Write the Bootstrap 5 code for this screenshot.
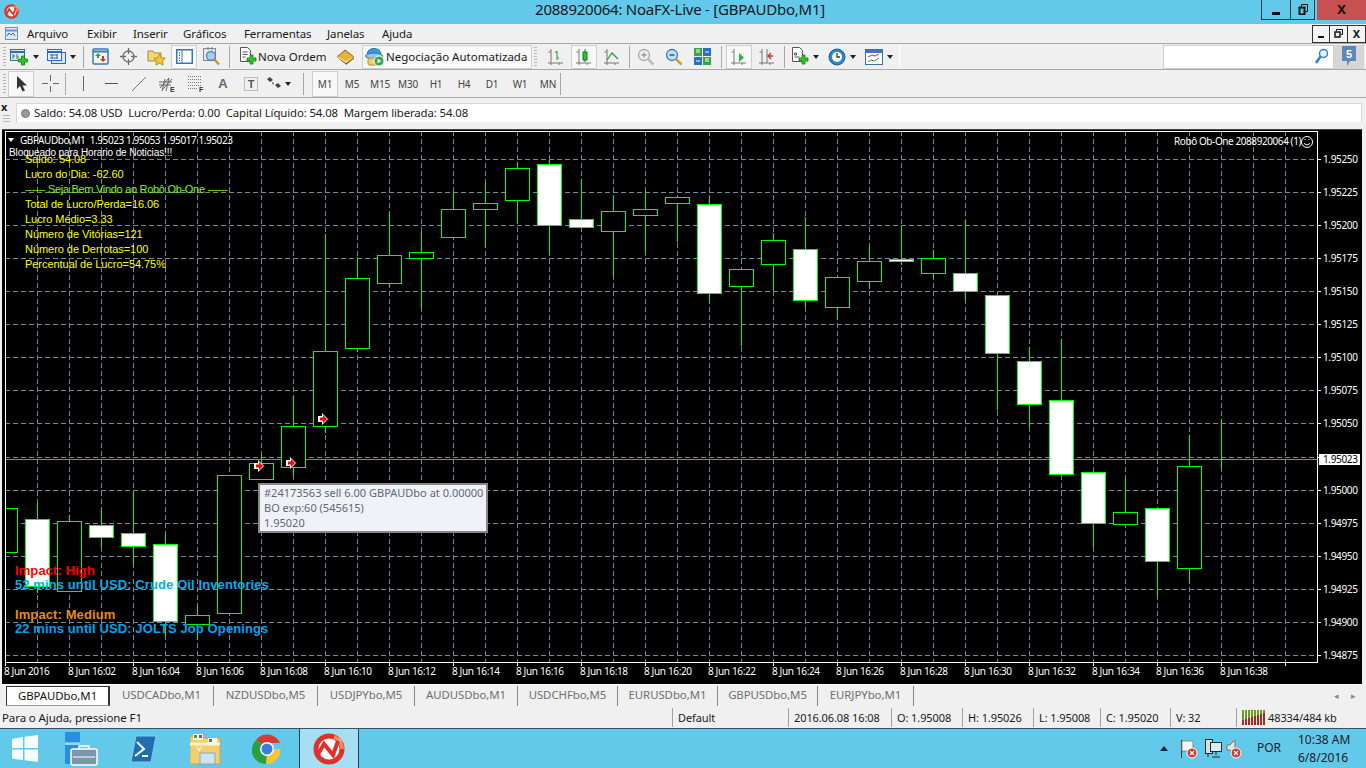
<!DOCTYPE html>
<html lang="pt">
<head>
  <meta charset="UTF-8" />
  <title>2088920064: NoaFX-Live - [GBPAUDbo,M1]</title>
  <link href="https://cdn.jsdelivr.net/npm/bootstrap@5.3.0/dist/css/bootstrap.min.css" rel="stylesheet">
  <style>
    html, body { height: 768px; overflow: hidden; }
    body { background: #f0f0f0; font: 11.5px/1.2 "Noto Sans", sans-serif; color: #1a1a1a; white-space: nowrap; }
    svg { display: block; flex: none; }

    .title-bar { height: 24px; background: #63c9ea; position: relative; font-size: 15px; }
    .title-text { flex: 1; text-align: center; padding-left: 80px; color: #101820; letter-spacing: -.25px; }
    .win-btn { height: 20px; border: 1px solid #1f3540; border-top: 0; border-left-width: 0; }
    .wb-min { width: 30px; border-left-width: 1px; }
    .wb-res { width: 24px; margin-right: 2px; }
    .wb-close { width: 49px; background: #c75050; border: 0; font-weight: 700; color: #111; font-size: 13px; }

    .menu-row { height: 20px; border-bottom: 1px solid #a8a8a8; }
    .menu-item { letter-spacing: -.1px; }
    .mi1 { width: 60px; } .mi2 { width: 46px; } .mi3 { width: 50px; } .mi4 { width: 61px; } .mi5 { width: 83px; } .mi6 { width: 55px; }
    .mdi-btn { width: 18px; height: 18px; border: 1px solid #333; border-left-width: 0; background: #f4f4f4; font-weight: 700; font-size: 11px; line-height: 15px; }
    .mdi-first { border-left-width: 1px; }

    .tool-row { height: 26px; border-bottom: 1px solid #a8a8a8; padding-left: 3px; position: relative; }
    .tool-row2 { height: 28px; }
    .grip { width: 3px; height: 20px; margin-right: 2px; background: repeating-linear-gradient(#b5b5b5 0 1px, #f0f0f0 1px 3px); }
    .tb { width: 26px; height: 24px; margin-right: 2px; border: 1px solid transparent; flex: none; }
    .tb-on { background: #f8f8f8; border-color: #cfcfcf; }
    .tb-wide { width: 34px; margin-right: 3px; gap: 4px; justify-content: flex-end; padding-right: 2px; }
    .tb-order { width: 96px; gap: 1px; margin-left: 1px; }
    .tb-auto { width: 170px; gap: 1px; background: #f8f8f8; border-color: #cfcfcf; padding-left: 2px; justify-content: flex-start; margin-left: 2px; }
    .caret-dn { width: 0; height: 0; border: 3px solid transparent; border-top: 4px solid #222; border-bottom: 0; }
    .sep { width: 1px; height: 22px; background: #a8a8a8; margin: 0 3px 0 2px; flex: none; }
    .sep-tight { margin-left: 1px; }
    .sep-wide { margin: 0 4px 0 4px; }
    .sep-far { margin-left: 10px; }
    .sep-last { margin-left: -2px; }
    .tb-end { width: 1px; height: 25px; background: #fff; }
    .search-box { width: 171px; height: 24px; background: #fff; border: 1px solid #d0d0d0; padding-right: 4px; }
    .bubble-btn { width: 30px; height: 24px; background: #d6d6d6; margin-right: 2px; }
    .tf { width: 28px; height: 26px; font-size: 10px; color: #444; letter-spacing: -.2px; flex: none; }
    .tf-on { width: 26px; background: #f8f8f8; border: 1px solid #cfcfcf; margin-left: 5px; }
    .tool2 { height: 26px; width: 28px; flex: none; }
    .tool2-on { width: 26px; background: #f8f8f8; border: 1px solid #cfcfcf; margin-right: 2px; }
    .tool-a { font: 700 13px "Liberation Sans", sans-serif; color: #666; }

    .info-row { height: 31px; padding: 5px 4px 4px 0; }
    .info-side { width: 16px; font-weight: 700; font-size: 11px; line-height: 8px; padding-left: 1px; }
    .info-grip { width: 7px; height: 8px; margin: 4px 0 0 2px; background: repeating-linear-gradient(#b5b5b5 0 1px, #f0f0f0 1px 3px); }
    .info-box { flex: 1; height: 20px; background: #fff; border: 1px solid #d8d8d8; border-bottom-color: #f0f0f0; padding-left: 4px; gap: 4px; }
    .led { width: 9px; height: 9px; border-radius: 50%; background: #9a9a9a; border: 1px solid #777; }
    .info-text { white-space: pre; font-size: 11.4px; letter-spacing: -.12px; }

    .chart-wrap { height: 555px; margin: 0 4px 0 2px; background: #000; position: relative; border-top: 1px solid #444; }
    .chart-svg text { font-family: "Noto Sans", sans-serif; font-size: 10px; fill: #fff; letter-spacing: -.35px; white-space: pre; }
    .chart-svg .head-txt { letter-spacing: -.42px; }
    .chart-svg .block-txt { font-family: "Liberation Sans", sans-serif; letter-spacing: -.1px; }
    .chart-svg .yellow-txt { font-family: "Liberation Sans", sans-serif; font-size: 11px; fill: #ff0; letter-spacing: -.05px; }
    .chart-svg .lime-txt { font-family: "Liberation Sans", sans-serif; font-size: 11px; fill: #7cfc00; letter-spacing: -.3px; }
    .chart-svg .news-txt { font-family: "Liberation Sans", sans-serif; font-size: 13px; font-weight: 700; letter-spacing: .1px; }
    .order-tip { position: absolute; left: 256px; top: 353px; width: 230px; height: 50px; background: #f0f2f8; border: 2px solid #878787; color: #5f6675; padding: 0 0 0 4px; font-size: 11px; line-height: 15px; }

    .tab-row { height: 22px; padding: 1px 0 0 6px; border-top: 1px solid #fff; }
    .sym-tab { height: 20px; text-align: center; color: #6f6f6f; border-right: 1px solid #8a8a8a; line-height: 18px; font-size: 11.4px; letter-spacing: -.05px; }
    .tab-active { width: 104px; color: #111; background: #fff; border: 1px solid #333; border-bottom-color: #999; border-right-width: 2px; }
    .tw104 { width: 104px; } .tw97 { width: 97px; } .tw103 { width: 103px; } .tw100 { width: 100px; } .tw96 { width: 96px; }
    .tab-arrows { gap: 12px; padding-right: 10px; color: #888; font-size: 9px; }

    .status-row { height: 22px; }
    .st-cell { height: 19px; border-left: 1px solid #a0a0a0; padding-left: 5px; line-height: 19px; font-size: 11px; letter-spacing: -.1px; }
    .st-help { width: 672px; padding-left: 2px; border: 0; font-size: 11.5px; }
    .sw116 { width: 116px; } .sw103 { width: 103px; } .sw71 { width: 71px; } .sw67 { width: 67px; } .sw70 { width: 70px; } .sw66 { width: 66px; }
    .sw-rest { flex: 1; gap: 3px; }

    .task-bar { height: 40px; background: #63c9ea; border-top: 1px solid #2f5565; font-size: 12px; }
    .task-app { height: 39px; flex: none; }
    .ta-start { width: 49px; }
    .ta-mgr { width: 65px; } .ta-ps { width: 58px; } .ta-fld { width: 66px; } .ta-gc { width: 58px; }
    .ta-mt { width: 60px; background: #a6dff3; border: 1px solid #27424e; border-width: 0 1px; margin-left: 3px; }
    .tray { gap: 7px; padding-right: 18px; }
    .tray-tri { width: 0; height: 0; border: 4px solid transparent; border-bottom: 5px solid #123; border-top: 0; margin-right: 5px; }
    .tray-net { margin-right: -3px; }
    .clock-txt { text-align: center; line-height: 18px; margin-left: 10px; width: 50px; }
  </style>
</head>
<body>

<svg width="0" height="0" class="position-absolute">
  <defs>
    <symbol id="plus" viewBox="0 0 18 18"><path d="M8 8h3V5h3v3h3v3h-3v3h-3v-3H8z" transform="translate(0 3)" fill="#34c524" stroke="#0f7d12" stroke-width=".8"/></symbol>
    <symbol id="mtlogo" viewBox="0 0 32 32"><circle cx="16" cy="16" r="13" fill="#fff" stroke="#e0302a" stroke-width="5"/><path d="M21 4a13 13 0 0 1 8 12" fill="none" stroke="#f08a5a" stroke-width="4"/><path d="M4 23 11 11l9 11 5-14" fill="none" stroke="#e0302a" stroke-width="4"/><path d="M25 5l4 1-1 5" fill="#f4a27c"/></symbol>
    <symbol id="axes" viewBox="0 0 18 18"><path d="M4 1v16M1 15h15M1.500 4H4M12 15v2" stroke="#777" fill="none"/></symbol>
  </defs>
</svg>

<div class="title-bar d-flex align-items-start">
  <svg class="ms-1 mt-1" width="15" height="15"><use href="#mtlogo"/></svg>
  <div class="title-text pt-0">2088920064: NoaFX-Live - [GBPAUDbo,M1]</div>
  <div class="win-btn wb-min d-flex justify-content-center align-items-end pb-1"><svg width="8" height="3"><rect width="8" height="3" fill="#111"/></svg></div>
  <div class="win-btn wb-res d-flex justify-content-center align-items-center"><svg width="10" height="11" fill="none" stroke="#111"><path d="M3.500 2.500V.5h6v7h-2"/><rect x="1.500" y="3.500" width="5" height="7" stroke-width="2"/></svg></div>
  <div class="win-btn wb-close d-flex justify-content-center align-items-center">X</div>
</div>

<div class="menu-row d-flex align-items-center">
  <svg class="ms-1 me-2" width="15" height="15" viewBox="0 0 15 15"><rect x="1.500" y="1.500" width="12" height="12" fill="#dfe9f5" stroke="#6a92c4"/><path d="M1 4.500h13" stroke="#6a92c4" stroke-width="2"/><path d="M3 10l2-3 2 2 2-2 2 3" fill="none" stroke="#3a62a0"/></svg>
  <nav class="d-flex">
    <span class="menu-item mi1">Arquivo</span><span class="menu-item mi2">Exibir</span><span class="menu-item mi3">Inserir</span><span class="menu-item mi4">Gráficos</span><span class="menu-item mi5">Ferramentas</span><span class="menu-item mi6">Janelas</span><span class="menu-item mi7">Ajuda</span>
  </nav>
  <div class="ms-auto d-flex">
    <div class="mdi-btn mdi-first d-flex justify-content-center align-items-end pb-1"><svg width="6" height="2"><rect width="6" height="2" fill="#111"/></svg></div>
    <div class="mdi-btn d-flex justify-content-center align-items-center"><svg width="9" height="9" fill="none" stroke="#111"><path d="M2.500 2V.5h6v5H7"/><rect x="1" y="3" width="5" height="5" stroke-width="1.500"/></svg></div>
    <div class="mdi-btn text-center">X</div>
  </div>
</div>

<div class="tool-row d-flex align-items-center">
  <div class="grip"></div>
  <div class="tb tb-wide d-flex align-items-center">
    <svg width="19" height="18" viewBox="0 0 19 18"><rect x=".5" y="1.500" width="14" height="11" fill="#dcebfa" stroke="#2f6ca8"/><path d="M.5 4h14" stroke="#2f6ca8" stroke-width="2"/><path d="M3 6v5M3 8h2M7 6v5M7 9h2" stroke="#3a7c3a"/><use href="#plus" width="19" height="18"/></svg>
    <span class="caret-dn"></span>
  </div>
  <div class="tb tb-wide d-flex align-items-center">
    <svg width="19" height="18" viewBox="0 0 19 18"><rect x="4.500" y="4.500" width="14" height="11" fill="#d7e6f6" stroke="#2f6ca8"/><rect x=".5" y="1.500" width="14" height="11" fill="#e8f1fb" stroke="#2f6ca8"/><path d="M.5 4h14" stroke="#2f6ca8" stroke-width="2"/><path d="M3 7h8M3 10h8M5 6v5M10 6v5" stroke="#3a6ea5"/></svg>
    <span class="caret-dn"></span>
  </div>
  <div class="sep sep-tight"></div>
  <div class="tb d-flex justify-content-center align-items-center"><svg width="17" height="17" viewBox="0 0 17 17"><rect x="1" y="1" width="15" height="15" rx="1" fill="#f2f6fb" stroke="#3a78b8" stroke-width="1.500"/><path d="M1 3.500h15" stroke="#3a78b8" stroke-width="2"/><path d="M6 5l3 3H7v2H5V8H3z" fill="#2aa83a"/><path d="M11 14l-3-3h2V8h2v3h2z" fill="#d8331f"/></svg></div>
  <div class="tb d-flex justify-content-center align-items-center"><svg width="17" height="17" viewBox="0 0 17 17" fill="none" stroke="#6c6c6c" stroke-width="1.300"><circle cx="8.500" cy="8.500" r="5.500"/><path d="M8.500 0v6M8.500 11v6M0 8.500h6M11 8.500h6"/></svg></div>
  <div class="tb d-flex justify-content-center align-items-center"><svg width="19" height="18" viewBox="0 0 19 18"><path d="M1 3h5l1 2h7v8H1z" fill="#f5d678" stroke="#a98a30"/><path d="M12.500 6l1.800 3.700 4 .6-2.900 2.800.7 4-3.600-1.900-3.600 1.900.7-4-2.900-2.800 4-.6z" fill="#f7c52e" stroke="#a97f10" stroke-width=".8"/></svg></div>
  <div class="tb tb-on d-flex justify-content-center align-items-center"><svg width="17" height="15" viewBox="0 0 17 15"><rect x=".75" y=".75" width="15.500" height="13.500" fill="#fff" stroke="#2c78c4" stroke-width="1.500"/><path d="M6 1v13" stroke="#2c78c4"/><path d="M3 4h1M3 6.500h1M3 9h1M3 11.500h1" stroke="#333"/></svg></div>
  <div class="tb d-flex justify-content-center align-items-center"><svg width="18" height="19" viewBox="0 0 18 19"><rect x=".5" y="1.500" width="12" height="12" fill="#e4e9ef" stroke="#7d8a98"/><path d="M5 0v3M9 0v3" stroke="#777"/><circle cx="8" cy="9" r="4.500" fill="#a7cdf0" stroke="#5c7fa0" stroke-width="1.300"/><path d="M11.500 12.500l4.500 5" stroke="#d08a1e" stroke-width="2.200"/></svg></div>
  <div class="sep"></div>
  <div class="tb tb-order d-flex align-items-center justify-content-start ps-1">
    <svg width="18" height="19" viewBox="0 0 18 19"><path d="M1.500.5h7l3 3v11h-10z" fill="#fff" stroke="#555"/><path d="M3.500 5h5M3.500 7.500h5M3.500 10h3" stroke="#555"/><use href="#plus" x="0" y="0" width="18" height="18"/></svg>
    <span class="tb-label">Nova Ordem</span>
  </div>
  <div class="tb d-flex justify-content-center align-items-center"><svg width="19" height="16" viewBox="0 0 19 16"><path d="M1 8l8-7 9 7-8 7z" fill="#e6b43a" stroke="#8a6414"/><path d="M1 8l9 5 8-5" fill="none" stroke="#fff2c4"/><path d="M10 15l8-7v1.500L10 16z" fill="#8a6414"/></svg></div>
  <div class="tb tb-auto d-flex align-items-center">
    <svg width="20" height="20" viewBox="0 0 20 20"><ellipse cx="9" cy="6" rx="6.500" ry="4.500" fill="#3f9bd8" stroke="#2470a8"/><ellipse cx="9" cy="9" rx="8.500" ry="3" fill="#8cc7ec" stroke="#2470a8"/><rect x="3" y="11" width="11" height="7" rx="2" fill="#f2cf6c" stroke="#b58c2c"/><circle cx="14" cy="14" r="5" fill="#2ba84a" stroke="#fff"/><path d="M12.500 11.500v5l4-2.500z" fill="#fff"/></svg>
    <span>Negociação Automatizada</span>
  </div>
  <div class="grip"></div>
  <div class="ms-1 d-flex align-items-center" id="chart-tools">
    <div class="tb d-flex justify-content-center align-items-center"><svg width="18" height="18"><use href="#axes"/><path d="M10 3v9M8 4h2M10 10h2" stroke="#1d9b2e" fill="none"/></svg></div>
    <div class="tb tb-on d-flex justify-content-center align-items-center"><svg width="18" height="18"><use href="#axes"/><rect x="8" y="4" width="4" height="8" fill="#2bc23b" stroke="#127a1e"/><path d="M10 1v3M10 12v2" stroke="#127a1e"/></svg></div>
    <div class="tb d-flex justify-content-center align-items-center"><svg width="18" height="18"><use href="#axes"/><path d="M4 12l5-7 6 6" stroke="#1d9b2e" fill="none" stroke-width="1.200"/></svg></div>
    <div class="sep"></div>
    <div class="tb d-flex justify-content-center align-items-center"><svg width="18" height="18" viewBox="0 0 18 18" fill="none" stroke="#a9a9a9"><circle cx="7" cy="7" r="5.500" fill="#eee" stroke-width="1.300"/><path d="M4.500 7h5M7 4.500v5" stroke="#999" stroke-width="1.300"/><path d="M11 11l5.500 5.500" stroke="#bbb" stroke-width="2.500"/></svg></div>
    <div class="tb d-flex justify-content-center align-items-center"><svg width="18" height="18" viewBox="0 0 18 18" fill="none"><circle cx="7" cy="7" r="5.500" fill="#bfe0f7" stroke="#3a7cbc" stroke-width="1.300"/><path d="M4.500 7h5" stroke="#245a96" stroke-width="1.500"/><path d="M11 11l5.500 5.500" stroke="#d89a2a" stroke-width="2.500"/></svg></div>
    <div class="tb d-flex justify-content-center align-items-center"><svg width="17" height="17" viewBox="0 0 17 17"><rect width="8" height="8" fill="#3aa34a"/><rect x="9" width="8" height="8" fill="#2c6fc0"/><rect y="9" width="8" height="8" fill="#2c6fc0"/><rect x="9" y="9" width="8" height="8" fill="#3aa34a"/><path d="M2 4h4M11 4h4M2 13h4M11 13h4M2 2h4M11 11h4" stroke="#fff"/></svg></div>
    <div class="sep sep-wide"></div>
    <div class="tb tb-on d-flex justify-content-center align-items-center"><svg width="18" height="18"><use href="#axes"/><path d="M9 5l5 4.500L9 14z" fill="#2bb53a"/></svg></div>
    <div class="tb d-flex justify-content-center align-items-center"><svg width="18" height="18"><use href="#axes"/><path d="M9 1v14" stroke="#777"/><path d="M15 8l-5 0M13 5l-3 3 3 3" stroke="#d0301f" fill="none" stroke-width="1.300"/></svg></div>
    <div class="sep"></div>
    <div class="tb tb-wide d-flex align-items-center"><svg width="18" height="19" viewBox="0 0 18 19"><path d="M1.500.5h7l3 3v11h-10z" fill="#fff" stroke="#555"/><path d="M3.500 6h2v2h-2zM3.500 10h5" stroke="#555" fill="none"/><use href="#plus" width="18" height="18"/></svg><span class="caret-dn"></span></div>
    <div class="tb tb-wide d-flex align-items-center"><svg width="18" height="18" viewBox="0 0 18 18"><circle cx="9" cy="9" r="8" fill="#2b86d2" stroke="#16619e"/><circle cx="9" cy="9" r="5" fill="#fff"/><path d="M9 5v4h3" stroke="#1c3c58" fill="none" stroke-width="1.300"/></svg><span class="caret-dn"></span></div>
    <div class="tb tb-wide d-flex align-items-center"><svg width="18" height="16" viewBox="0 0 18 16"><rect x=".5" y=".5" width="17" height="15" fill="#fff" stroke="#3a6ea5"/><path d="M.5 2.500h17" stroke="#3a78b8" stroke-width="3"/><path d="M3 8l4-2 3 1 4-2" stroke="#c8311c" fill="none"/><path d="M3 13l3-2 3 1 5-3" stroke="#2a9a3a" fill="none"/></svg><span class="caret-dn"></span></div>
  </div>
  <div class="tb-end"></div>
  <div class="ms-auto d-flex align-items-center">
    <div class="search-box d-flex justify-content-end align-items-center"><svg width="15" height="17" viewBox="0 0 15 17" fill="none"><circle cx="9.500" cy="5.500" r="4" fill="#eaf5fd" stroke="#2d7fd0" stroke-width="1.500"/><path d="M6.500 8.500L2 15" stroke="#2d7fd0" stroke-width="2.500"/></svg></div>
    <div class="bubble-btn d-flex justify-content-center align-items-center"><svg width="16" height="21" viewBox="0 0 16 21"><path d="M1 0h14v15H9l-3 5v-5H1z" fill="#5f86b8"/><text x="8" y="12" text-anchor="middle" fill="#fff" font-family="Liberation Sans" font-weight="700" font-size="11">5</text></svg></div>
  </div>
</div>

<div class="tool-row tool-row2 d-flex align-items-center">
  <div class="grip"></div>
  <div class="tool2 tool2-on d-flex justify-content-center align-items-center"><svg width="11" height="16" viewBox="0 0 11 16"><path d="M1 0v13l3-3 2.500 5.500 2.500-1L6.500 9.500H11z" fill="#333"/></svg></div>
  <div class="tool2 d-flex justify-content-center align-items-center"><svg width="17" height="17" stroke="#666"><path d="M8.500 0v6M8.500 11v6M0 8.500h6M11 8.500h6"/></svg></div>
  <div class="sep sep-tight"></div>
  <div class="tool2 d-flex justify-content-center align-items-center"><svg width="3" height="15" stroke="#666"><path d="M1.500 0v15"/></svg></div>
  <div class="tool2 d-flex justify-content-center align-items-center"><svg width="13" height="3" stroke="#555"><path d="M0 1.500h13"/></svg></div>
  <div class="tool2 d-flex justify-content-center align-items-center"><svg width="16" height="14" stroke="#777" fill="none"><path d="M1 14L15 0"/></svg></div>
  <div class="tool2 d-flex justify-content-center align-items-center"><svg width="17" height="18" viewBox="0 0 17 18" stroke="#666" fill="none"><path d="M1 13L10 3M4 14L13 4M0 7h13M0 10h12M3 16l3-12M7 16l3-13"/><text x="11" y="17" font-family="Liberation Sans" font-size="7" font-weight="700" fill="#333" stroke="none">E</text></svg></div>
  <div class="tool2 d-flex justify-content-center align-items-center"><svg width="17" height="17" viewBox="0 0 17 17" stroke="#777" stroke-dasharray="1 1" fill="none"><path d="M1 1.500h13M1 4.500h13M1 7.500h13M1 10.500h13M1 13.500h9"/><text x="12" y="16.500" font-family="Liberation Sans" font-size="7" font-weight="700" fill="#333" stroke="none" stroke-dasharray="0">F</text></svg></div>
  <div class="tool2 d-flex justify-content-center align-items-center tool-a">A</div>
  <div class="tool2 d-flex justify-content-center align-items-center"><svg width="14" height="14" viewBox="0 0 14 14"><rect x=".5" y=".5" width="13" height="13" fill="none" stroke="#888" stroke-dasharray="1 1"/><text x="7" y="11" text-anchor="middle" font-family="Liberation Sans" font-size="11" font-weight="700" fill="#555">T</text></svg></div>
  <div class="tool2 d-flex justify-content-center align-items-center gap-1"><svg width="14" height="13" viewBox="0 0 14 13" fill="#444"><path d="M0 2l3-2 3 3-3 2zM5 5l2 1-1 2zM8 8l3-2 3 3-3 2z"/></svg><span class="caret-dn"></span></div>
  <div class="sep sep-far"></div>
  <div class="tf tf-on d-flex justify-content-center align-items-center">M1</div>
  <div class="tf d-flex justify-content-center align-items-center">M5</div>
  <div class="tf d-flex justify-content-center align-items-center">M15</div>
  <div class="tf d-flex justify-content-center align-items-center">M30</div>
  <div class="tf d-flex justify-content-center align-items-center">H1</div>
  <div class="tf d-flex justify-content-center align-items-center">H4</div>
  <div class="tf d-flex justify-content-center align-items-center">D1</div>
  <div class="tf d-flex justify-content-center align-items-center">W1</div>
  <div class="tf d-flex justify-content-center align-items-center">MN</div>
  <div class="sep sep-last"></div>
</div>

<div class="info-row d-flex">
  <div class="info-side">x<div class="info-grip"></div></div>
  <div class="info-box d-flex align-items-center">
    <span class="led"></span>
    <span class="info-text">Saldo: 54.08 USD  Lucro/Perda: 0.00  Capital Líquido: 54.08  Margem liberada: 54.08</span>
  </div>
</div>

<div class="chart-wrap">
  <svg id="chart" class="chart-svg" width="1360" height="554" viewBox="2 130 1360 554"></svg>
  <div class="order-tip">#24173563 sell 6.00 GBPAUDbo at 0.00000<br>BO exp:60 (545615)<br>1.95020</div>
</div>

<div class="tab-row d-flex">
  <div class="sym-tab tab-active">GBPAUDbo,M1</div>
  <div class="sym-tab tw104">USDCADbo,M1</div>
  <div class="sym-tab tw104">NZDUSDbo,M5</div>
  <div class="sym-tab tw97">USDJPYbo,M5</div>
  <div class="sym-tab tw103">AUDUSDbo,M1</div>
  <div class="sym-tab tw100">USDCHFbo,M5</div>
  <div class="sym-tab tw100">EURUSDbo,M1</div>
  <div class="sym-tab tw100">GBPUSDbo,M5</div>
  <div class="sym-tab tw96">EURJPYbo,M1</div>
  <div class="ms-auto d-flex align-items-center tab-arrows"><span>◂</span><span>▸</span></div>
</div>

<div class="status-row d-flex align-items-center">
  <div class="st-cell st-help">Para o Ajuda, pressione F1</div>
  <div class="st-cell sw116">Default</div>
  <div class="st-cell sw103">2016.06.08 16:08</div>
  <div class="st-cell sw71">O: 1.95008</div>
  <div class="st-cell sw71">H: 1.95026</div>
  <div class="st-cell sw67">L: 1.95008</div>
  <div class="st-cell sw70">C: 1.95020</div>
  <div class="st-cell sw66">V: 32</div>
  <div class="st-cell sw-rest d-flex align-items-center"><svg id="traffic" width="23" height="16"></svg><span>48334/484 kb</span></div>
</div>

<div class="task-bar d-flex">
  <div class="task-app ta-start d-flex justify-content-center align-items-center"><svg width="28" height="27" viewBox="0 0 28 27" fill="#fff" opacity=".95"><path d="M1 4l11-2v11H1zM13.500 1.800L27 0v13H13.500zM1 14.500h11v10.700L1 23.500zM13.500 14.500H27V27l-13.500-1.800z"/></svg></div>
  <div class="task-app ta-mgr d-flex justify-content-center align-items-center"><svg width="33" height="34" viewBox="0 0 33 34"><rect x="0" y="0" width="15" height="10" fill="#2a8ede"/><rect x="0" y="11" width="15" height="21" fill="#2a8ede"/><rect x="0" y="11" width="15" height="2" fill="#9ed2f4"/><rect x="6" y="17" width="26" height="16" rx="2" fill="#7a97ac" stroke="#fff" stroke-width="1.500"/><path d="M14 17v-3h10v3" fill="none" stroke="#fff" stroke-width="1.500"/><path d="M8 25h22" stroke="#fff"/></svg></div>
  <div class="task-app ta-ps d-flex justify-content-center align-items-center"><svg width="27" height="28" viewBox="0 0 27 28"><path d="M6 1h20l-5 26H1z" fill="#1f6fb0" stroke="#8cc4ea"/><path d="M7 7l7 7-9 7" fill="none" stroke="#fff" stroke-width="2"/><path d="M12 21h6" stroke="#fff" stroke-width="2"/></svg></div>
  <div class="task-app ta-fld d-flex justify-content-center align-items-center"><svg width="31" height="32" viewBox="0 0 31 32"><path d="M0 3h10l2 2h18v26H0z" fill="#f4cf6e" stroke="#c9a447"/><rect x="3" y="1" width="10" height="6" fill="#fff"/><rect x="4" y="2" width="3" height="3" fill="#2fa84a"/><rect x="9" y="2" width="3" height="3" fill="#d8392b"/><rect x="18" y="5" width="9" height="5" fill="#fff"/><rect x="19" y="6" width="3" height="3" fill="#2a80d8"/><path d="M0 11h30" stroke="#fff3c8" stroke-width="3"/><rect x="10" y="20" width="15" height="11" fill="#cfe3f2" stroke="#8aa8bf"/><path d="M6 13l3 6 3-6-3 3z" fill="#fff"/></svg></div>
  <div class="task-app ta-gc d-flex justify-content-center align-items-center"><svg width="30" height="30" viewBox="0 0 30 30"><path d="M15 15L4 6a14 14 0 0 1 24 3H15z" fill="#db3a2e"/><path d="M15 15h13.500a14 14 0 0 1-14.500 15z" fill="#f6c530"/><path d="M15 15l-1 15A14 14 0 0 1 4 6z" fill="#2aa046"/><circle cx="15" cy="15" r="7" fill="#fff"/><circle cx="15" cy="15" r="5.500" fill="#3a7de0"/></svg></div>
  <div class="task-app ta-mt d-flex justify-content-center align-items-center"><svg width="32" height="32"><use href="#mtlogo"/></svg></div>
  <div class="ms-auto d-flex align-items-center tray">
    <span class="tray-tri"></span>
    <svg width="18" height="20" viewBox="0 0 18 20"><path d="M1.500 1v18" stroke="#333"/><path d="M2 2h11v10H2z" fill="#f4f4f4" stroke="#888"/><circle cx="12" cy="14" r="5" fill="#d9342a" stroke="#fff"/><path d="M10 12l4 4M14 12l-4 4" stroke="#fff" stroke-width="1.300"/></svg>
    <svg class="tray-net" width="17" height="19" viewBox="0 0 17 19" fill="none" stroke="#1c2c36"><rect x=".5" y=".5" width="7" height="14" fill="#dcdcdc"/><rect x="5.500" y="3.500" width="11" height="9" fill="#d8ecf4"/><path d="M11 13v3M7 18h8M3 15v3"/></svg>
    <svg width="16" height="20" viewBox="0 0 16 20"><path d="M1 6h3l5-5v14l-5-4H1z" fill="#e4e4e4" stroke="#777"/><circle cx="10" cy="14" r="5" fill="#d9342a" stroke="#fff"/><path d="M8 12l4 4M12 12l-4 4" stroke="#fff" stroke-width="1.300"/></svg>
    <span class="ms-2">POR</span>
    <div class="clock-txt">10:38 AM<br>6/8/2016</div>
  </div>
</div>

<script>
const NS = "http://www.w3.org/2000/svg";
const chart = document.getElementById("chart");

function add(tag, attrs, text) {
  const el = document.createElementNS(NS, tag);
  for (const k in attrs) el.setAttribute(k, attrs[k]);
  if (text) el.textContent = text;
  chart.appendChild(el);
  return el;
}

// plot area
const LEFT = 5, RIGHT = 1317, TOP = 131, BOTTOM = 662;
const gridY = [159,192,225,258,291,324,357,390,423,457,490,523,556,589,622,655];
const prices = ["1.95250","1.95225","1.95200","1.95175","1.95150","1.95125","1.95100","1.95075","1.95050","","1.95000","1.94975","1.94950","1.94925","1.94900","1.94875"];

for (let x = 37; x < RIGHT; x += 32)
  add("path", {d:`M${x+.5} ${TOP}V${BOTTOM}`, stroke:"#778899", "stroke-dasharray":"5 3", "shape-rendering":"crispEdges"});
gridY.forEach((y, i) => {
  add("path", {d:`M${LEFT} ${y+.5}H${RIGHT}`, stroke:"#778899", "stroke-dasharray":"5 3", "shape-rendering":"crispEdges"});
  add("path", {d:`M${RIGHT} ${y+.5}h4`, stroke:"#fff", "shape-rendering":"crispEdges"});
  if (prices[i]) add("text", {x:1323, y:y+4}, prices[i]);
});
// current price line
add("path", {d:`M${LEFT} 459.5H${RIGHT}`, stroke:"#778899", "shape-rendering":"crispEdges"});

// [center x, body top, body bottom, wick top, wick bottom, filled]
const candles = [
  [5,508,552,500,569,0],[37,519,586,503,593,1],[69,521,591,515,591,0],[101,525,537,509,547,1],
  [133,533,546,491,566,1],[165,544,621,534,636,1],[197,615,624,606,640,0],[229,475,613,475,613,0],
  [261,463,479,455,479,0],[293,426,467,396,476,0],[325,351,426,234,433,0],[357,278,348,257,352,0],
  [389,255,283,213,286,0],[421,252,258,232,308,0],[453,209,237,192,237,0],[485,203,209,183,248,0],
  [517,168,200,162,224,0],[549,164,225,160,255,1],[581,219,227,179,229,1],[613,211,231,197,276,0],
  [645,209,215,191,254,0],[677,197,203,197,242,0],[709,204,293,197,303,1],[741,269,286,269,346,0],
  [773,240,264,233,291,0],[805,249,300,217,307,1],[837,277,307,277,320,0],[869,261,281,246,289,0],
  [901,259,261,226,265,1],[933,258,273,250,279,0],[965,273,291,220,301,1],[997,295,353,295,410,1],
  [1029,361,404,347,427,1],[1061,400,474,339,474,1],[1093,472,523,472,547,1],[1125,512,524,478,524,0],
  [1157,508,561,508,598,1],[1189,466,568,435,583,0],[1221,459,459,419,469,0]
];
const GREEN = "#00ff00";
candles.forEach(([x, top, bot, wt, wb, filled]) => {
  add("path", {d:`M${x+.5} ${wt}V${wb}`, stroke:GREEN, "shape-rendering":"crispEdges"});
  const left = Math.max(x - 12, LEFT);
  if (top === bot) { add("path", {d:`M${x-12} ${top+.5}h25`, stroke:GREEN, "shape-rendering":"crispEdges"}); return; }
  // outline first, then the inside, so the white bodies keep their whole green edge
  add("rect", {x:left, y:top, width:x+13-left, height:bot-top+1, fill:GREEN, "shape-rendering":"crispEdges"});
  add("rect", {x:left+1, y:top+1, width:x+11-left, height:bot-top-1, fill:filled?"#fff":"#000", "shape-rendering":"crispEdges"});
});

// plot frame
add("path", {d:`M${LEFT+.5} ${BOTTOM}V${TOP+.5}H${RIGHT+.5}V${BOTTOM+.5}H${LEFT}`, fill:"none", stroke:"#fff", "shape-rendering":"crispEdges"});

// sell arrows of the open orders: white block behind, red arrow on top
[[259,466],[291,463],[323,419]].forEach(([x, y]) => {
  add("path", {d:`M${x-5} ${y-3}h4v-3l6 6-6 6v-3h-4z`, fill:"#fff"});
  add("path", {d:`M${x-3} ${y-1.500}h3v-2.500l4 4-4 4v-2.500h-3z`, fill:"#f00"});
});

// time axis
for (let i = 0; i < 21; i++) add("path", {d:`M${LEFT+64*i+.5} ${BOTTOM}v4`, stroke:"#fff", "shape-rendering":"crispEdges"});
const times = ["8 Jun 2016"];
for (let m = 2; m <= 38; m += 2) times.push("8 Jun 16:" + String(m).padStart(2, "0"));
times.forEach((t, i) => add("text", {x:4+64*i, y:675}, t));

// current price box
add("rect", {x:1319, y:454, width:41, height:11, fill:"#fff"});
add("text", {x:1323, y:463, style:"fill:#000"}, "1.95023");

// chart labels
add("path", {d:"M8 138h6l-3 4z", fill:"#fff"});
add("text", {x:20, y:144, class:"head-txt"}, "GBPAUDbo,M1  1.95023 1.95053 1.95017 1.95023");
add("text", {x:9, y:156, class:"block-txt"}, "Bloqueado para Horario de Noticias!!!");
add("text", {x:1174, y:145, class:"head-txt"}, "Robô Ob-One 2088920064 (1)");
add("circle", {cx:1307, cy:142, r:5.5, fill:"none", stroke:"#fff"});
add("path", {d:"M1304 143.500q3 3 6 0", fill:"none", stroke:"#fff"});
add("path", {d:"M1304.500 139.500h1M1308.500 139.500h1", stroke:"#fff"});

[["Saldo: 54.08",163],["Lucro do Dia: -62.60",178],["Total de Lucro/Perda=16.06",208],["Lucro Médio=3.33",223],
 ["Número de Vitórias=121",238],["Número de Derrotas=100",253],["Percentual de Lucro=54.75%",268]]
  .forEach(([t, y]) => add("text", {x:25, y, class:"yellow-txt"}, t));
add("text", {x:25, y:193, class:"lime-txt"}, "------ Seja Bem Vindo ao Robô Ob-One ------");

add("text", {x:15, y:575, class:"news-txt", style:"fill:#f00"}, "Impact: High");
add("text", {x:15, y:589, class:"news-txt", style:"fill:#00aeef"}, "52 mins until USD: Crude Oil Inventories");
add("text", {x:15, y:619, class:"news-txt", style:"fill:#e08e0b"}, "Impact: Medium");
add("text", {x:15, y:633, class:"news-txt", style:"fill:#00a4ee"}, "22 mins until USD: JOLTS Job Openings");

// connection bars in the status bar
const traffic = document.getElementById("traffic");
let bars = "";
for (let i = 0; i < 8; i++) {
  const h = 5 + i;
  bars += `<rect x="${i*3}" y="${16-h}" width="2" height="${h}" fill="#a52a1c"/>`;
  bars += `<rect x="${i*3}" y="1" width="2" height="${15-h}" fill="#6e9a2a"/>`;
}
traffic.innerHTML = bars;
</script>

</body>
</html>
